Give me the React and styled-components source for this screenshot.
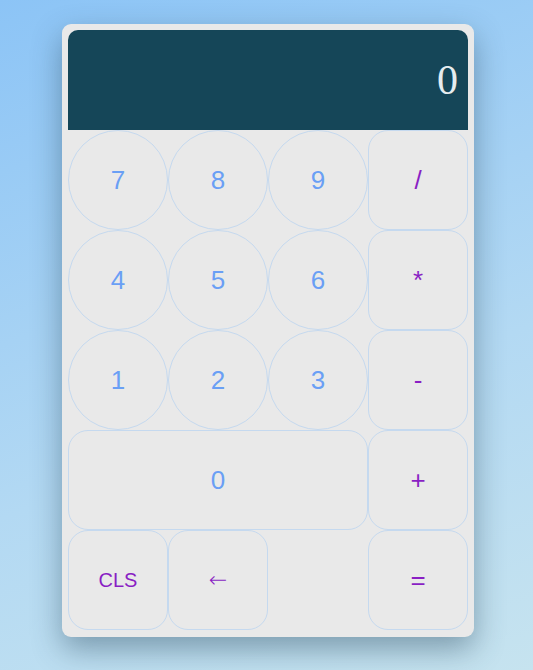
import React from "react";
import styled, { createGlobalStyle } from "styled-components";

const GlobalStyle = createGlobalStyle`
  html, body {
    margin: 0;
    padding: 0;
    height: 100%;
  }
  body {
    background: linear-gradient(160deg, #8cc4f6 0%, #b3d9f3 60%, #c6e3ef 100%);
    font-family: "Liberation Sans", Arial, sans-serif;
  }
`;

const keys = [
  { label: "7", kind: "num" },
  { label: "8", kind: "num" },
  { label: "9", kind: "num" },
  { label: "/", kind: "op" },
  { label: "4", kind: "num" },
  { label: "5", kind: "num" },
  { label: "6", kind: "num" },
  { label: "*", kind: "op" },
  { label: "1", kind: "num" },
  { label: "2", kind: "num" },
  { label: "3", kind: "num" },
  { label: "-", kind: "op" },
  { label: "0", kind: "zero" },
  { label: "+", kind: "op" },
  { label: "CLS", kind: "cls" },
  { label: "←", kind: "back" },
  { label: "", kind: "empty" },
  { label: "=", kind: "op" },
];

const App = () => {
  return (
    <>
      <GlobalStyle />
      <Page>
        <Calculator>
          <Display>0</Display>
          <Keypad>
            {keys.map((k, i) =>
              k.kind === "empty" ? (
                <Spacer key={i} />
              ) : (
                <Key key={i} kind={k.kind}>
                  {k.label}
                </Key>
              )
            )}
          </Keypad>
        </Calculator>
      </Page>
    </>
  );
};

const Page = styled.div`
  padding: 24px 0 0 62px;
  height: 670px;
  box-sizing: border-box;
`;

const Calculator = styled.div`
  width: 412px;
  height: 613px;
  box-sizing: border-box;
  padding: 6px 6px 7px;
  background: #e9e9e9;
  border-radius: 9px;
  box-shadow: 0 12px 30px rgba(40, 70, 90, 0.45);
`;

const Display = styled.div`
  height: 100px;
  background: #154658;
  border-radius: 10px 10px 0 0;
  display: flex;
  align-items: center;
  justify-content: flex-end;
  padding: 0 10px 0 0;
  color: #e6edf0;
  font-family: "Liberation Serif", "Times New Roman", serif;
  font-size: 42px;
`;

const Keypad = styled.div`
  display: grid;
  grid-template-columns: repeat(4, 100px);
  grid-auto-rows: 100px;
`;

const Key = styled.button`
  box-sizing: border-box;
  margin: 0;
  padding: 0;
  background: transparent;
  border: 1px solid #c5d9ef;
  border-radius: ${(p) => (p.kind === "num" ? "50%" : "20px")};
  grid-column: ${(p) => (p.kind === "zero" ? "span 3" : "auto")};
  color: ${(p) => (p.kind === "num" || p.kind === "zero" ? "#6a9ff5" : "#8a1fc4")};
  font-family: ${(p) =>
    p.kind === "back"
      ? '"DejaVu Sans", sans-serif'
      : '"Liberation Sans", Arial, sans-serif'};
  font-weight: ${(p) => (p.kind === "back" ? 200 : 400)};
  font-size: ${(p) =>
    p.kind === "cls" ? "20px" : p.kind === "back" ? "22px" : "26px"};
  line-height: 1;
  cursor: pointer;
`;

const Spacer = styled.div``;

export default App;
